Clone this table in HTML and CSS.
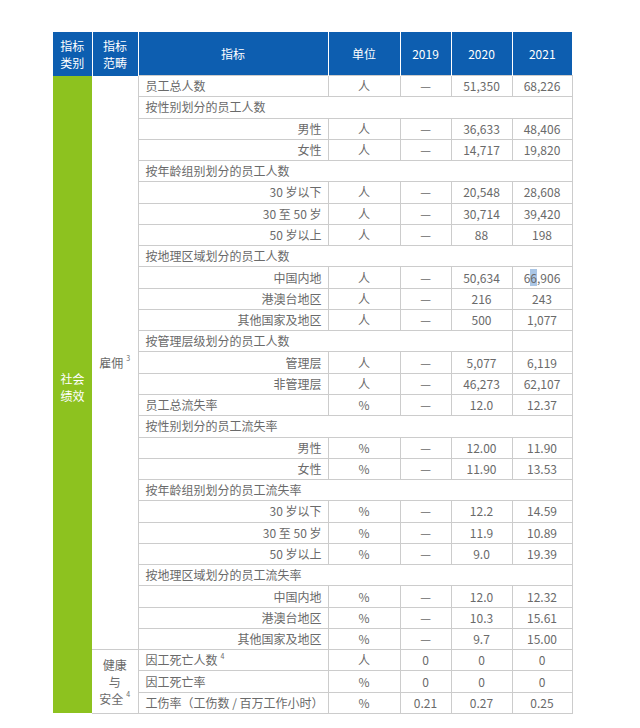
FILE: index.html
```html
<!DOCTYPE html>
<html lang="zh">
<head>
<meta charset="utf-8">
<link rel="stylesheet" href="styles.css">
</head>
<body>
<div class="page">
<table class="tbl">
<colgroup>
<col class="c-cat"><col class="c-scope"><col class="c-name"><col class="c-unit"><col class="c-y19"><col class="c-y20"><col class="c-y21">
</colgroup>
<thead>
<tr><th>指标<br>类别</th><th>指标<br>范畴</th><th>指标</th><th>单位</th><th>2019</th><th>2020</th><th>2021</th></tr>
</thead>
<tbody>
<tr><td class="cat" rowspan="30"><span class="cat-txt">社会<br>绩效</span></td><td class="scope" rowspan="27">雇佣<sup>3</sup></td><td class="name">员工总人数</td><td>人</td><td>—</td><td>51,350</td><td>68,226</td></tr>
<tr><td class="name" colspan="5">按性别划分的员工人数</td></tr>
<tr><td class="sub">男性</td><td>人</td><td>—</td><td>36,633</td><td>48,406</td></tr>
<tr><td class="sub">女性</td><td>人</td><td>—</td><td>14,717</td><td>19,820</td></tr>
<tr><td class="name" colspan="5">按年龄组别划分的员工人数</td></tr>
<tr><td class="sub">30 岁以下</td><td>人</td><td>—</td><td>20,548</td><td>28,608</td></tr>
<tr><td class="sub">30 至 50 岁</td><td>人</td><td>—</td><td>30,714</td><td>39,420</td></tr>
<tr><td class="sub">50 岁以上</td><td>人</td><td>—</td><td>88</td><td>198</td></tr>
<tr><td class="name" colspan="5">按地理区域划分的员工人数</td></tr>
<tr><td class="sub">中国内地</td><td>人</td><td>—</td><td>50,634</td><td>6<span class="sel">6</span>,906</td></tr>
<tr><td class="sub">港澳台地区</td><td>人</td><td>—</td><td>216</td><td>243</td></tr>
<tr><td class="sub">其他国家及地区</td><td>人</td><td>—</td><td>500</td><td>1,077</td></tr>
<tr><td class="name" colspan="4">按管理层级划分的员工人数</td><td></td></tr>
<tr><td class="sub">管理层</td><td>人</td><td>—</td><td>5,077</td><td>6,119</td></tr>
<tr><td class="sub">非管理层</td><td>人</td><td>—</td><td>46,273</td><td>62,107</td></tr>
<tr><td class="name">员工总流失率</td><td>%</td><td>—</td><td>12.0</td><td>12.37</td></tr>
<tr><td class="name" colspan="5">按性别划分的员工流失率</td></tr>
<tr><td class="sub">男性</td><td>%</td><td>—</td><td>12.00</td><td>11.90</td></tr>
<tr><td class="sub">女性</td><td>%</td><td>—</td><td>11.90</td><td>13.53</td></tr>
<tr><td class="name" colspan="5">按年龄组别划分的员工流失率</td></tr>
<tr><td class="sub">30 岁以下</td><td>%</td><td>—</td><td>12.2</td><td>14.59</td></tr>
<tr><td class="sub">30 至 50 岁</td><td>%</td><td>—</td><td>11.9</td><td>10.89</td></tr>
<tr><td class="sub">50 岁以上</td><td>%</td><td>—</td><td>9.0</td><td>19.39</td></tr>
<tr><td class="name" colspan="5">按地理区域划分的员工流失率</td></tr>
<tr><td class="sub">中国内地</td><td>%</td><td>—</td><td>12.0</td><td>12.32</td></tr>
<tr><td class="sub">港澳台地区</td><td>%</td><td>—</td><td>10.3</td><td>15.61</td></tr>
<tr><td class="sub">其他国家及地区</td><td>%</td><td>—</td><td>9.7</td><td>15.00</td></tr>
<tr><td class="scope" rowspan="3">健康<br>与<br>安全<sup>4</sup></td><td class="name">因工死亡人数<sup>4</sup></td><td>人</td><td>0</td><td>0</td><td>0</td></tr>
<tr><td class="name">因工死亡率</td><td>%</td><td>0</td><td>0</td><td>0</td></tr>
<tr><td class="name">工伤率（工伤数 / 百万工作小时）</td><td>%</td><td>0.21</td><td>0.27</td><td>0.25</td></tr>
</tbody>
</table>
</div>
</body>
</html>
```
FILE: styles.css
```css
html, body {
  margin: 0;
  padding: 0;
  background: #ffffff;
}
.page {
  padding: 32px 0 0 53px;
}
.tbl {
  border-collapse: collapse;
  table-layout: fixed;
  width: 519px;
  font-family: "Noto Sans CJK SC", "Noto Sans", sans-serif;
  font-size: 12px;
  color: #6a6a6a;
}
.c-cat { width: 39px; }
.c-scope { width: 46px; }
.c-name { width: 190px; }
.c-unit { width: 72px; }
.c-y19 { width: 51px; }
.c-y20 { width: 61px; }
.c-y21 { width: 60px; }
.tbl th {
  background: #0d5eb0;
  color: #ffffff;
  font-weight: normal;
  height: 43px;
  padding: 0;
  line-height: 17px;
  border-left: 1px solid #ffffff;
  text-align: center;
  vertical-align: middle;
}
.tbl th:first-child {
  border-left: none;
}
.tbl tbody tr {
  height: 21.27px;
}
.tbl td {
  border: 1px solid #cccccc;
  padding: 0;
  text-align: center;
  vertical-align: middle;
  line-height: 16px;
  white-space: nowrap;
}
.tbl td.cat {
  background: #8dc21f;
  color: #ffffff;
  border: none;
  line-height: 17px;
}
.cat-txt {
  display: inline-block;
  position: relative;
  top: -7px;
}
.tbl td.scope {
  border-left: none;
  border-top: none;
  line-height: 17px;
}
.tbl td.name {
  text-align: left;
  padding-left: 7px;
}
.tbl td.sub {
  text-align: right;
  padding-right: 6px;
}
sup {
  font-size: 7px;
  vertical-align: top;
  line-height: 8px;
  margin-left: 3px;
}
.sel {
  background: #aac6e6;
}
```
